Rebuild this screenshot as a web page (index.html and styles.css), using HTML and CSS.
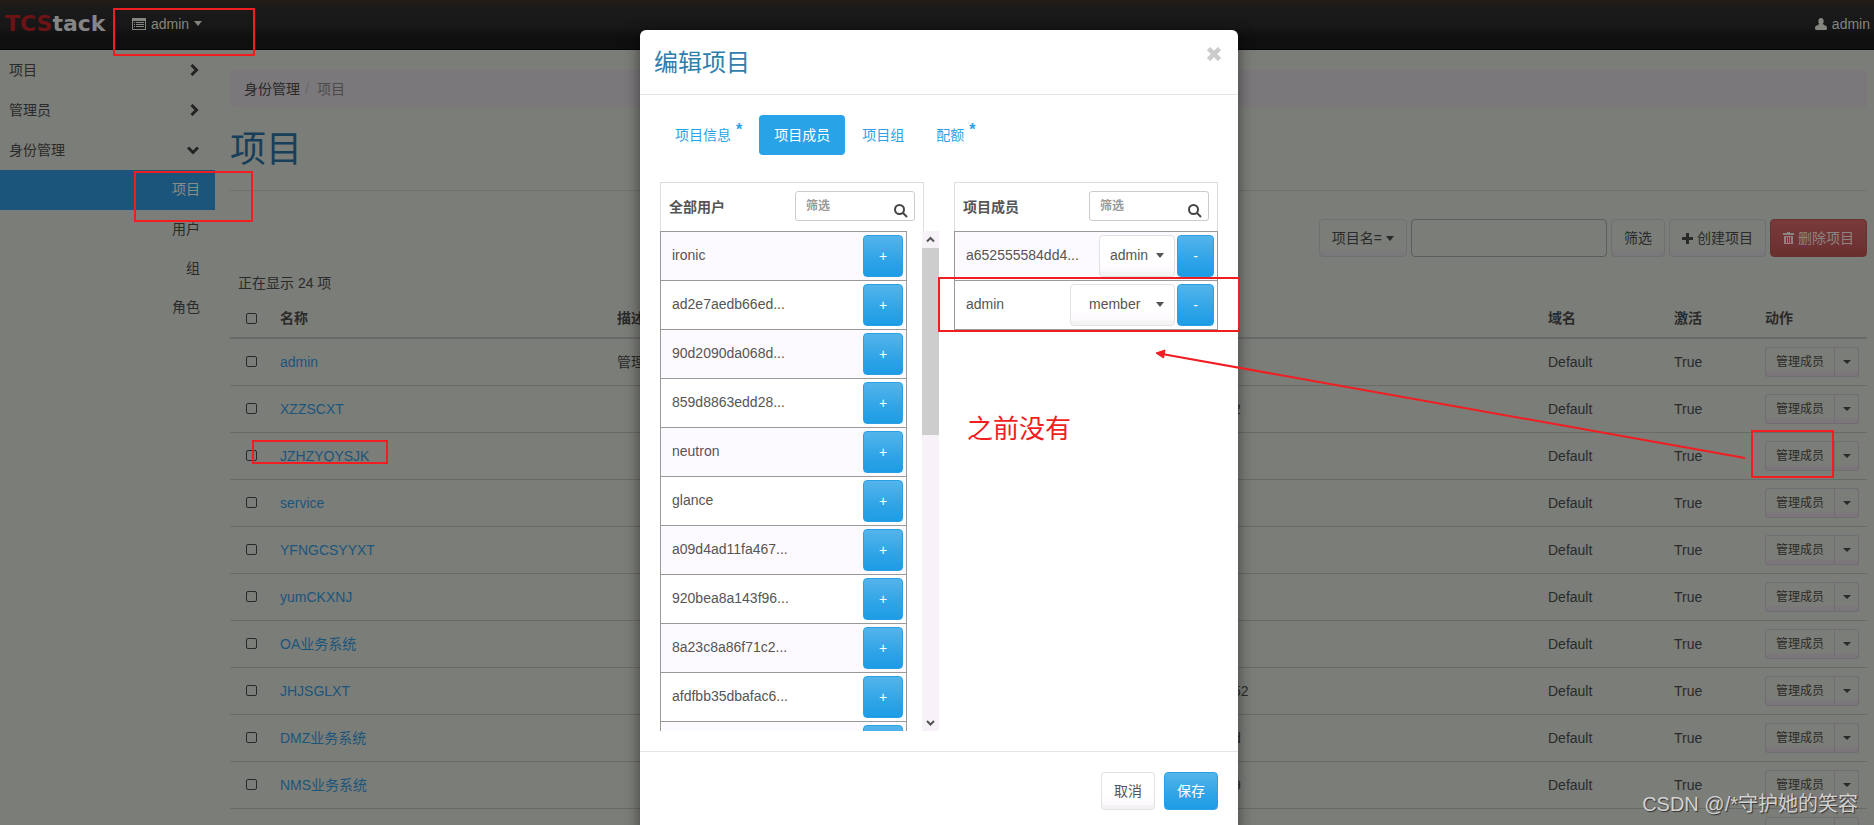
FILE: index.html
```html
<!DOCTYPE html>
<html lang="zh-CN">
<head>
<meta charset="utf-8">
<title>项目 - TCStack</title>
<link rel="stylesheet" href="styles.css">
</head>
<body>
<header class="topbar">
  <a class="logo" href="#"><span class="logo-accent">TCS</span>tack</a>
  <button class="top-item" type="button">
    <svg width="14" height="12" viewBox="0 0 14 12"><path fill="currentColor" fill-rule="evenodd" d="M0 0h14v12H0zM1 3v8h12V3z"/><path fill="currentColor" d="M2 4h1v1H2zM4 4h8v1H4zM2 6h1v1H2zM4 6h8v1H4zM2 8h1v1H2zM4 8h8v1H4z"/></svg>
    admin <span class="caret"></span>
  </button>
  <a class="top-item user" href="#">
    <svg width="12" height="12" viewBox="0 0 12 12"><path fill="currentColor" d="M6 0a3 3 0 0 1 2.600 3.200c.2 1.200-.2 2-.8 2.600L9 7c2 .4 3 1.400 3 3v1l-1 1H1l-1-1v-1c0-1.600 1-2.600 3-3l1.200-1.200c-.6-.6-1-1.400-.8-2.600A3 3 0 0 1 6 0z"/></svg>
    admin
  </a>
</header>
<div class="layout">
  <nav class="sidebar">
    <a class="group" href="#">项目<svg width="9" height="12" viewBox="0 0 9 12"><path class="chev" d="M1.500 1l5 5-5 5"/></svg></a>
    <a class="group" href="#">管理员<svg width="9" height="12" viewBox="0 0 9 12"><path class="chev" d="M1.500 1l5 5-5 5"/></svg></a>
    <a class="group" href="#">身份管理<svg width="12" height="9" viewBox="0 0 12 9"><path class="chev" d="M1 1.500l5 5 5-5"/></svg></a>
    <a class="sub active" href="#">项目</a>
    <a class="sub" href="#">用户</a>
    <a class="sub" href="#">组</a>
    <a class="sub" href="#">角色</a>
  </nav>
  <main class="main">
    <div class="crumbs"><a href="#">身份管理</a><span class="sep">/</span><span class="here">项目</span></div>
    <h1 class="page-title">项目</h1>
    <div class="toolbar">
      <button class="btn" type="button">项目名= <span class="caret"></span></button>
      <input class="filter" type="text" aria-label="项目名">
      <button class="btn" type="button">筛选</button>
      <button class="btn" type="button"><svg width="11" height="11" viewBox="0 0 11 11"><path fill="currentColor" d="M4 0h3v4h4v3H7v4H4V7H0V4h4z"/></svg>创建项目</button>
      <button class="btn danger" type="button"><svg width="11" height="12" viewBox="0 0 11 12"><path fill="currentColor" fill-rule="evenodd" d="M4 0h3v1h4v2H0V1h4zM1 4h9v8H1zM3 5v6h1V5zM5 5v6h1V5zM7 5v6h1V5z"/></svg>删除项目</button>
    </div>
    <table class="projects">
      <caption>正在显示 24 项</caption>
      <colgroup><col class="c-check"><col class="c-name"><col class="c-desc"><col class="c-id"><col class="c-domain"><col class="c-on"><col class="c-act"></colgroup>
      <thead><tr><th><input type="checkbox" aria-label="全选"></th><th>名称</th><th>描述</th><th></th><th>域名</th><th>激活</th><th>动作</th></tr></thead>
      <tbody id="rows"></tbody>
    </table>
  </main>
</div>

<section class="modal" role="dialog" aria-labelledby="modal-title">
  <div class="modal-head">
    <h2 id="modal-title">编辑项目</h2>
    <button class="close" type="button" aria-label="关闭"><svg width="14" height="14" viewBox="0 0 14 14"><path d="M1.500 1.500l11 11M12.500 1.500l-11 11" stroke="currentColor" stroke-width="4.500"/></svg></button>
  </div>
  <div class="modal-body">
    <div class="tabs">
      <a class="tab" href="#">项目信息<span class="star">*</span></a>
      <a class="tab current" href="#">项目成员</a>
      <a class="tab" href="#">项目组</a>
      <a class="tab" href="#">配额<span class="star">*</span></a>
    </div>
    <div class="panels">
      <div class="panel">
        <div class="panel-head"><label for="f1">全部用户</label><span class="search"><input id="f1" type="text" placeholder="筛选"><svg width="14" height="14" viewBox="0 0 14 14"><circle cx="5.500" cy="5.500" r="4.500"/><path d="M9 9l4 4"/></svg></span></div>
        <div class="scroller">
          <div class="list" id="users"></div>
          <div class="scrollbar"><svg width="17" height="17" viewBox="0 0 17 17"><path d="M5 10.500L8.500 7l3.500 3.500"/></svg><div class="thumb"></div><svg width="17" height="17" viewBox="0 0 17 17"><path d="M5 7l3.500 3.500L12 7"/></svg></div>
        </div>
      </div>
      <div class="panel">
        <div class="panel-head"><label for="f2">项目成员</label><span class="search"><input id="f2" type="text" placeholder="筛选"><svg width="14" height="14" viewBox="0 0 14 14"><circle cx="5.500" cy="5.500" r="4.500"/><path d="M9 9l4 4"/></svg></span></div>
        <div class="list members">
          <div class="row"><span class="who">a652555584dd4...</span><button class="role" type="button">admin<span class="caret"></span></button><button class="add" type="button">-</button></div>
          <div class="row"><span class="who">admin</span><button class="role wide" type="button">member<span class="caret"></span></button><button class="add" type="button">-</button></div>
        </div>
      </div>
    </div>
  </div>
  <div class="modal-foot"><button class="btn-light" type="button">取消</button><button class="btn-blue" type="button">保存</button></div>
</section>

<svg class="marks" width="1874" height="825" viewBox="0 0 1874 825">
  <rect x="114" y="9" width="140" height="46"/>
  <rect x="135" y="172" width="117" height="49"/>
  <rect x="253" y="441" width="134" height="22"/>
  <rect x="939" y="278" width="300" height="53"/>
  <rect x="1752" y="431" width="81" height="46"/>
  <path d="M1745 458L1162 354"/>
  <path class="head" d="M1156 353l9-3-1.500 8z"/>
</svg>
<p class="note">之前没有</p>
<p class="credit">CSDN @/*守护她的笑容</p>
<script src="app.js"></script>
</body>
</html>
```
FILE: styles.css
```css
* { box-sizing: border-box; }
body {
  margin: 0;
  height: 100vh;
  overflow: hidden;
  position: relative;
  background: #7b7d78;
  color: #2a2a2a;
  font: 14px/20px "Liberation Sans", "Noto Sans CJK SC", sans-serif;
}
a { color: inherit; text-decoration: none; }
button, input { font: inherit; color: inherit; margin: 0; }
button { display: inline-flex; align-items: center; justify-content: center; }
.caret { border: 4px solid transparent; border-top: 5px solid currentColor; border-bottom: 0; }

.topbar {
  height: 50px;
  display: flex;
  align-items: center;
  padding: 0 4px 2px 5px;
  color: #85857f;
  background: linear-gradient(#221b17 0, #191a19 20%, #171717 55%, #0f0f0f 75%, #0f0f0f 100%);
  border-bottom: 1px solid #060606;
}
.logo { font: bold 22px/30px "DejaVu Sans", sans-serif; color: #858585; width: 127px; }
.logo-accent { color: #6b1315; }
.top-item { display: flex; gap: 5px; align-items: center; border: 0; background: none; padding: 0; color: inherit; }
.user { margin-left: auto; }

.layout { display: flex; }
.sidebar { width: 215px; flex: none; display: flex; flex-direction: column; }
.group { height: 40px; display: flex; align-items: center; justify-content: space-between; padding: 0 16px 0 9px; }
.chev { fill: none; stroke: #242424; stroke-width: 3; }
.sub { height: 39px; display: flex; align-items: center; justify-content: flex-end; padding: 0 15px 2px 0; }
.sub.active { height: 40px; background: #1c557b; color: #8c8c88; }

.main { flex: 1; min-width: 0; padding: 20px 7px 0 15px; }
.crumbs { height: 37px; display: flex; align-items: center; gap: 5px; padding-left: 14px; background: #7b787c; border-radius: 4px; }
.sep { color: #666; }
.here { color: #4a4b49; padding-left: 3px; }
.page-title { margin: 20px 0 28px; height: 64px; padding-top: 3px; border-bottom: 1px solid #6f716d; color: #183f5a; font-size: 36px; line-height: 40px; font-weight: 400; }
.toolbar { display: flex; justify-content: flex-end; gap: 4px; }
.btn { height: 38px; padding: 0 12px; gap: 4px; border: 1px solid #706f71; border-radius: 4px; background: linear-gradient(#7b7d78 80%, #7b787c 90%); }
.filter { width: 196px; height: 38px; border: 1px solid #5d5c5c; border-radius: 4px; background: none; }
.danger { color: #8c8480; border-color: #69302f; background: linear-gradient(#783a3a, #6f3234 75%, #69302d 85%); }

.projects { width: 100%; border-collapse: collapse; table-layout: fixed; margin-top: 16px; }
.projects caption { text-align: left; padding: 0 0 0 8px; line-height: 20px; }
.c-check { width: 42px; } .c-name { width: 337px; } .c-id { width: 315px; }
.c-domain { width: 126px; } .c-on { width: 91px; } .c-act { width: 110px; }
.projects th { height: 45px; padding: 6px 8px 0; text-align: left; border-bottom: 2px solid #6a6b69; }
.projects td { height: 47px; padding: 0 8px; border-bottom: 1px solid #6a6b69; }
.projects input { appearance: none; display: block; width: 11px; height: 11px; margin: 0 0 0 8px; border: 1px solid #292929; border-radius: 2px; }
.projects td a { color: #1c557b; }
.actions { display: flex; }
.actions button { height: 30px; min-width: 70px; padding: 0 10px; font-size: 12px; border: 1px solid #706c72; border-radius: 3px 0 0 3px; background: linear-gradient(#7b7d78 80%, #7b767c 90%); }
.actions button + button { min-width: 24px; padding: 0 8px; border-left: 0; border-radius: 0 3px 3px 0; }
.actions .caret { border-width: 4px 4px 0; }

.modal {
  position: absolute; top: 30px; left: 640px; right: 636px; bottom: -8px;
  background: #fff; color: #555; border-radius: 6px 6px 0 0;
  box-shadow: 0 5px 15px rgba(0, 0, 0, .5);
}
.modal-head { height: 65px; padding: 2px 17px 0 14px; display: flex; align-items: center; justify-content: space-between; border-bottom: 1px solid #e5e5e5; }
.modal-head h2 { margin: 0; font-size: 24px; line-height: 32px; font-weight: 400; color: #317eac; }
.close { border: 0; background: none; padding: 0; color: #ccc; margin-bottom: 18px; }
.modal-body { padding: 20px 20px; }
.tabs { display: flex; gap: 2px; color: #29a3e8; }
.tab { height: 40px; padding: 0 15px; display: flex; align-items: center; }
.tab .star { font-size: 16px; font-weight: bold; padding: 0 0 10px 5px; }
.current { background: #29a3e8; color: #fff; border-radius: 4px; }
.panels { display: flex; justify-content: space-between; margin-top: 27px; height: 549px; }
.panel { width: 264px; display: flex; flex-direction: column; }
.panel-head { height: 49px; flex: none; display: flex; align-items: center; justify-content: space-between; padding: 0 8px; border: 1px solid #ddd; border-bottom: 0; font-weight: bold; }
.search { position: relative; display: flex; margin-bottom: 2px; }
.search input { width: 120px; height: 30px; padding: 0 10px; font-size: 12px; border: 1px solid #ccc; border-radius: 3px; }
.search input::placeholder { color: #999; }
.search svg { position: absolute; right: 7px; bottom: 3px; fill: none; stroke: #444; stroke-width: 2; }
.scroller { display: flex; justify-content: space-between; flex: 1; min-height: 0; margin-right: -15px; overflow: hidden; }
.scroller .list { width: 247px; }
.row { height: 49px; display: flex; align-items: center; gap: 2px; padding: 0 3px 0 11px; border: 1px solid #999; border-bottom: 0; }
.row:nth-child(odd) { background: #fdfaff; }
.members { border-bottom: 1px solid #999; }
.who { flex: 1; padding-bottom: 2px; }
.add, .btn-blue { border: 1px solid #2a9fe4; border-radius: 4px; color: #fff; background: linear-gradient(#54b4eb, #2fa4e7 60%, #1d9ce5); }
.add { width: 40px; height: 42px; padding: 0; }
.members .add { width: 37px; }
.role, .btn-light { border: 1px solid #e2e2e2; border-radius: 4px; background: linear-gradient(#fff 60%, #fcf9fd 88%, #f4f4f4 90%); }
.role { width: 76px; height: 42px; padding: 0 10px 2px; justify-content: space-between; }
.wide { width: 105px; padding-left: 18px; }
.scrollbar { width: 17px; display: flex; flex-direction: column; background: #f6f2f7; }
.scrollbar svg { fill: none; stroke: #555; stroke-width: 2; flex: none; }
.thumb { height: 187px; background: #cdcdcd; margin-bottom: auto; }
.modal-foot { display: flex; justify-content: flex-end; gap: 9px; padding: 20px; border-top: 1px solid #e5e5e5; }
.modal-foot button { height: 38px; width: 54px; padding: 0; }

.marks { position: absolute; top: 0; left: 0; fill: none; stroke: #f21d20; stroke-width: 2; pointer-events: none; }
.marks .head { fill: #f21d20; stroke-width: 1; }
.note { position: absolute; left: 967px; top: 411px; margin: 0; font-size: 26px; line-height: 36px; color: #f21d20; }
.credit { position: absolute; right: 16px; bottom: 7px; margin: 0; font-size: 20px; line-height: 28px; color: #d2d2d0; text-shadow: 1px 1px 1px #333; }
```
FILE: app.js
```javascript
const projects = [
  ["admin", "管理", ""], ["XZZSCXT", "", "2"], ["JZHZYQYSJK", "", ""], ["service", "", ""],
  ["YFNGCSYYXT", "", ""], ["yumCKXNJ", "", ""], ["OA业务系统", "", ""], ["JHJSGLXT", "", "52"],
  ["DMZ业务系统", "", "d"], ["NMS业务系统", "", "9"], ["", "", ""]
];
document.getElementById("rows").innerHTML = projects.map(([name, desc, id]) => `
  <tr><td>${name && `<input type="checkbox" aria-label="${name}">`}</td><td><a href="#">${name}</a></td>
  <td>${desc}</td><td>${id}</td><td>${name && "Default"}</td><td>${name && "True"}</td>
  <td><div class="actions"><button type="button">${name && "管理成员"}</button><button type="button" aria-label="更多"><span class="caret"></span></button></div></td></tr>`).join("");

const users = ["ironic", "ad2e7aedb66ed...", "90d2090da068d...", "859d8863edd28...", "neutron", "glance",
  "a09d4ad11fa467...", "920bea8a143f96...", "8a23c8a86f71c2...", "afdfbb35dbafac6...", ""];
document.getElementById("users").innerHTML = users.map(u =>
  `<div class="row"><span class="who">${u}</span><button class="add" type="button">+</button></div>`).join("");
```
